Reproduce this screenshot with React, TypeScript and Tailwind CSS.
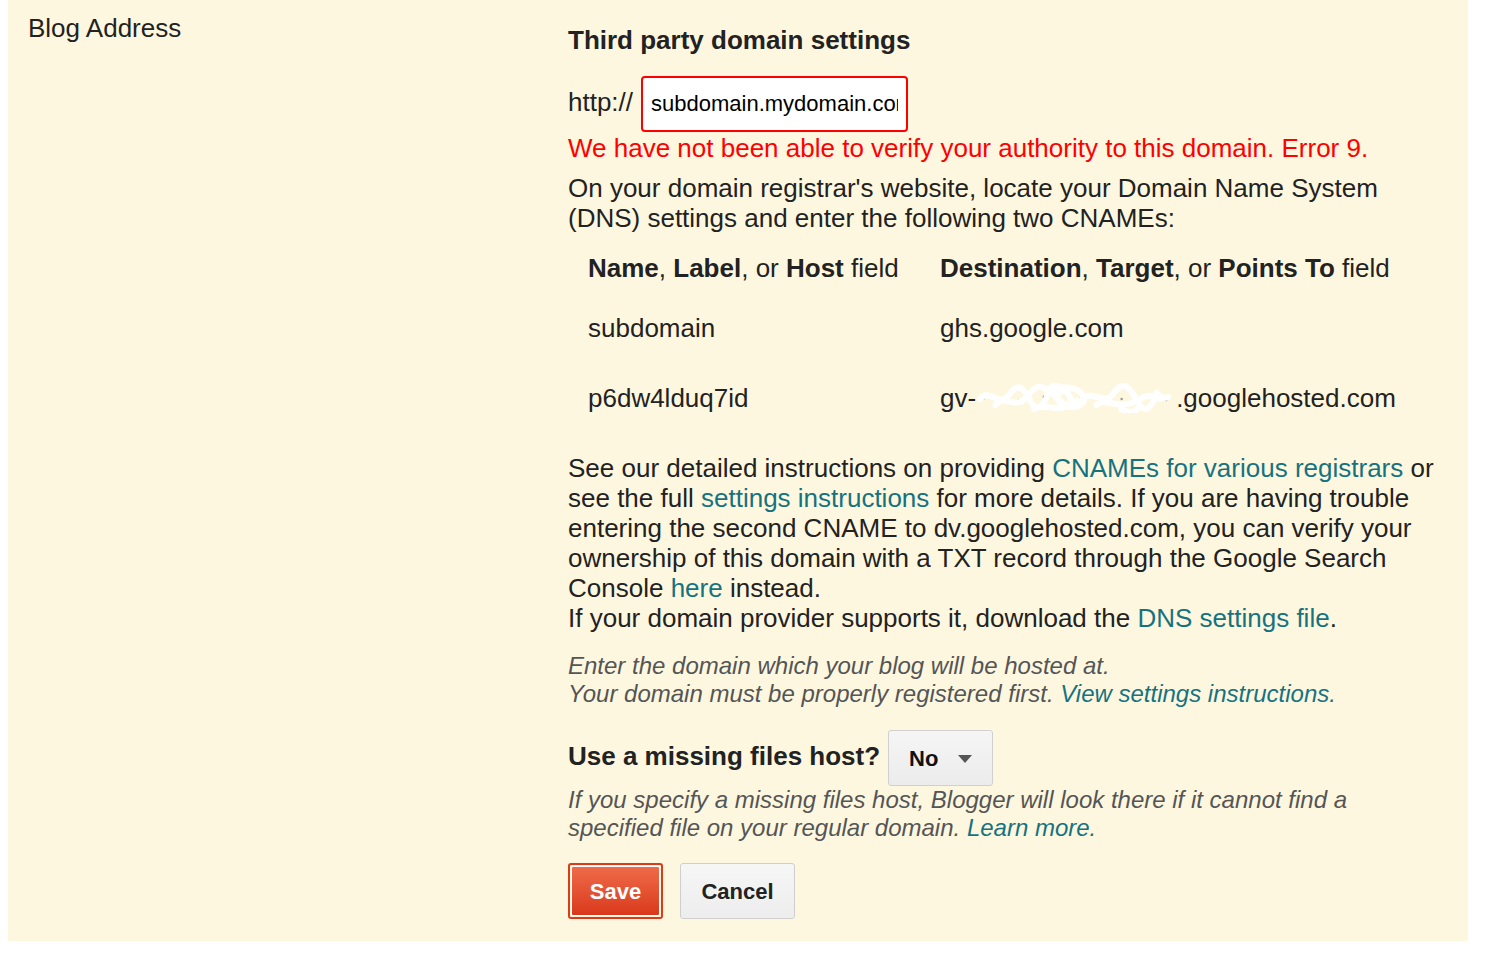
import React from 'react'

const font = { fontFamily: '"Liberation Sans", Arial, sans-serif' }

function Link({ children }: { children: React.ReactNode }) {
  return <span className="text-[#15737f]">{children}</span>
}

// blurred-out part of the verification host
function Scribble() {
  return (
    <span className="inline-block w-[200px] h-[30px] align-middle relative -top-[2px]">
      <svg viewBox="0 0 206 30" className="w-full h-full" preserveAspectRatio="none">
        <g fill="#444" opacity="0.55">
          <circle cx="8" cy="15" r="1.5" />
          <circle cx="44" cy="17" r="1.2" />
          <circle cx="70" cy="14" r="1.4" />
          <circle cx="104" cy="17" r="1.3" />
          <circle cx="150" cy="16" r="1.2" />
          <circle cx="182" cy="18" r="1.3" />
          <circle cx="196" cy="17" r="1.2" />
        </g>
        <g fill="none" stroke="#fff" strokeWidth="6" strokeLinecap="round" strokeLinejoin="round">
          <path d="M4 16 C14 4 24 26 34 12 S50 6 56 18 S70 24 74 10 S92 4 98 16" />
          <path d="M20 22 C30 10 40 28 52 14 S66 2 78 10 S88 26 104 18" />
          <path d="M80 8 C90 2 104 4 110 12 S102 28 90 22 S84 8 96 6" />
          <path d="M110 16 C120 6 132 24 142 10 S158 4 166 18 S178 26 186 14" />
          <path d="M124 22 C134 14 146 26 160 20 S176 10 190 16" />
          <path d="M150 26 C156 30 164 30 166 26" />
          <path d="M186 10 C190 14 194 16 198 14" />
          <path d="M60 26 C70 20 80 28 92 24" />
        </g>
      </svg>
    </span>
  )
}

export default function App() {
  return (
    <div className="w-[1498px] h-[958px] bg-white text-[#222]" style={font}>
      <div className="ml-[8px] w-[1460px] h-[941px] bg-[#fef7e0] flex">
        {/* Left label column */}
        <div className="w-[560px] pl-[20px] pt-[14px] text-[26px] leading-[28px]">Blog Address</div>

        {/* Settings column */}
        <div className="w-[880px] pt-[26px] text-[26px]">
          <h2 className="font-bold text-[26px] leading-[28px]">Third party domain settings</h2>

          <div className="mt-[22px] flex items-center gap-[8px]">
            <span className="leading-[28px] -mt-[4px]">http://</span>
            <input
              readOnly
              defaultValue="subdomain.mydomain.com"
              className="w-[267px] h-[56px] bg-white border-2 border-[#f00] rounded-[4px] pl-[8px] pr-[8px] text-[22px] text-black outline-none"
              style={font}
            />
          </div>

          <p className="mt-[1px] text-[#ff0000] leading-[30px]">
            We have not been able to verify your authority to this domain. Error 9.
          </p>

          <p className="mt-[10px] leading-[30px]">
            On your domain registrar's website, locate your Domain Name System (DNS) settings and enter the following two CNAMEs:
          </p>

          {/* CNAME table */}
          <div className="mt-[20px] pl-[20px] leading-[30px]">
            <div className="flex">
              <div className="w-[352px]">
                <b>Name</b>, <b>Label</b>, or <b>Host</b> field
              </div>
              <div>
                <b>Destination</b>, <b>Target</b>, or <b>Points To</b> field
              </div>
            </div>
            <div className="flex mt-[30px]">
              <div className="w-[352px]">subdomain</div>
              <div>ghs.google.com</div>
            </div>
            <div className="flex mt-[40px]">
              <div className="w-[352px]">p6dw4lduq7id</div>
              <div className="whitespace-nowrap">
                gv-<Scribble />.googlehosted.com
              </div>
            </div>
          </div>

          <p className="mt-[38px] leading-[30px]">
            See our detailed instructions on providing <Link>CNAMEs for various registrars</Link> or see the full{' '}
            <Link>settings instructions</Link> for more details. If you are having trouble entering the second CNAME to
            dv.googlehosted.com, you can verify your ownership of this domain with a TXT record through the Google Search
            Console <Link>here</Link> instead.
            <br />
            If your domain provider supports it, download the <Link>DNS settings file</Link>.
          </p>

          <p className="mt-[19px] italic text-[24px] leading-[28px] text-[#555]">
            Enter the domain which your blog will be hosted at.
            <br />
            Your domain must be properly registered first. <Link>View settings instructions.</Link>
          </p>

          <div className="mt-[22px] flex items-center gap-[8px]">
            <span className="font-bold leading-[28px] -mt-[4px]">Use a missing files host?</span>
            <div className="w-[105px] h-[56px] rounded-[3px] border border-[#d0d0d0] bg-gradient-to-b from-[#f5f5f5] to-[#ececec] flex items-center pl-[20px] gap-[20px]">
              <span className="font-bold text-[22px] text-[#111]">No</span>
              <svg width="14" height="8" viewBox="0 0 14 8" className="mt-[2px]">
                <path d="M0 0 L14 0 L7 8 Z" fill="#555" />
              </svg>
            </div>
          </div>

          <p className="italic text-[24px] leading-[28px] text-[#555]">
            If you specify a missing files host, Blogger will look there if it cannot find a specified file on your regular
            domain. <Link>Learn more.</Link>
          </p>

          <div className="mt-[21px] flex gap-[17px]">
            <button className="w-[95px] h-[56px] rounded-[3px] border-2 border-[#dd3a1a] p-[1px]">
              <span className="w-full h-full flex items-center justify-center rounded-[2px] border border-white bg-gradient-to-b from-[#ef6a48] to-[#d9381a] text-white font-bold text-[22px]">
                Save
              </span>
            </button>
            <button className="w-[115px] h-[56px] rounded-[3px] border border-[#cfcfcf] bg-gradient-to-b from-[#f6f6f6] to-[#ededed] font-bold text-[22px] text-[#222]">
              Cancel
            </button>
          </div>
        </div>
      </div>
    </div>
  )
}
